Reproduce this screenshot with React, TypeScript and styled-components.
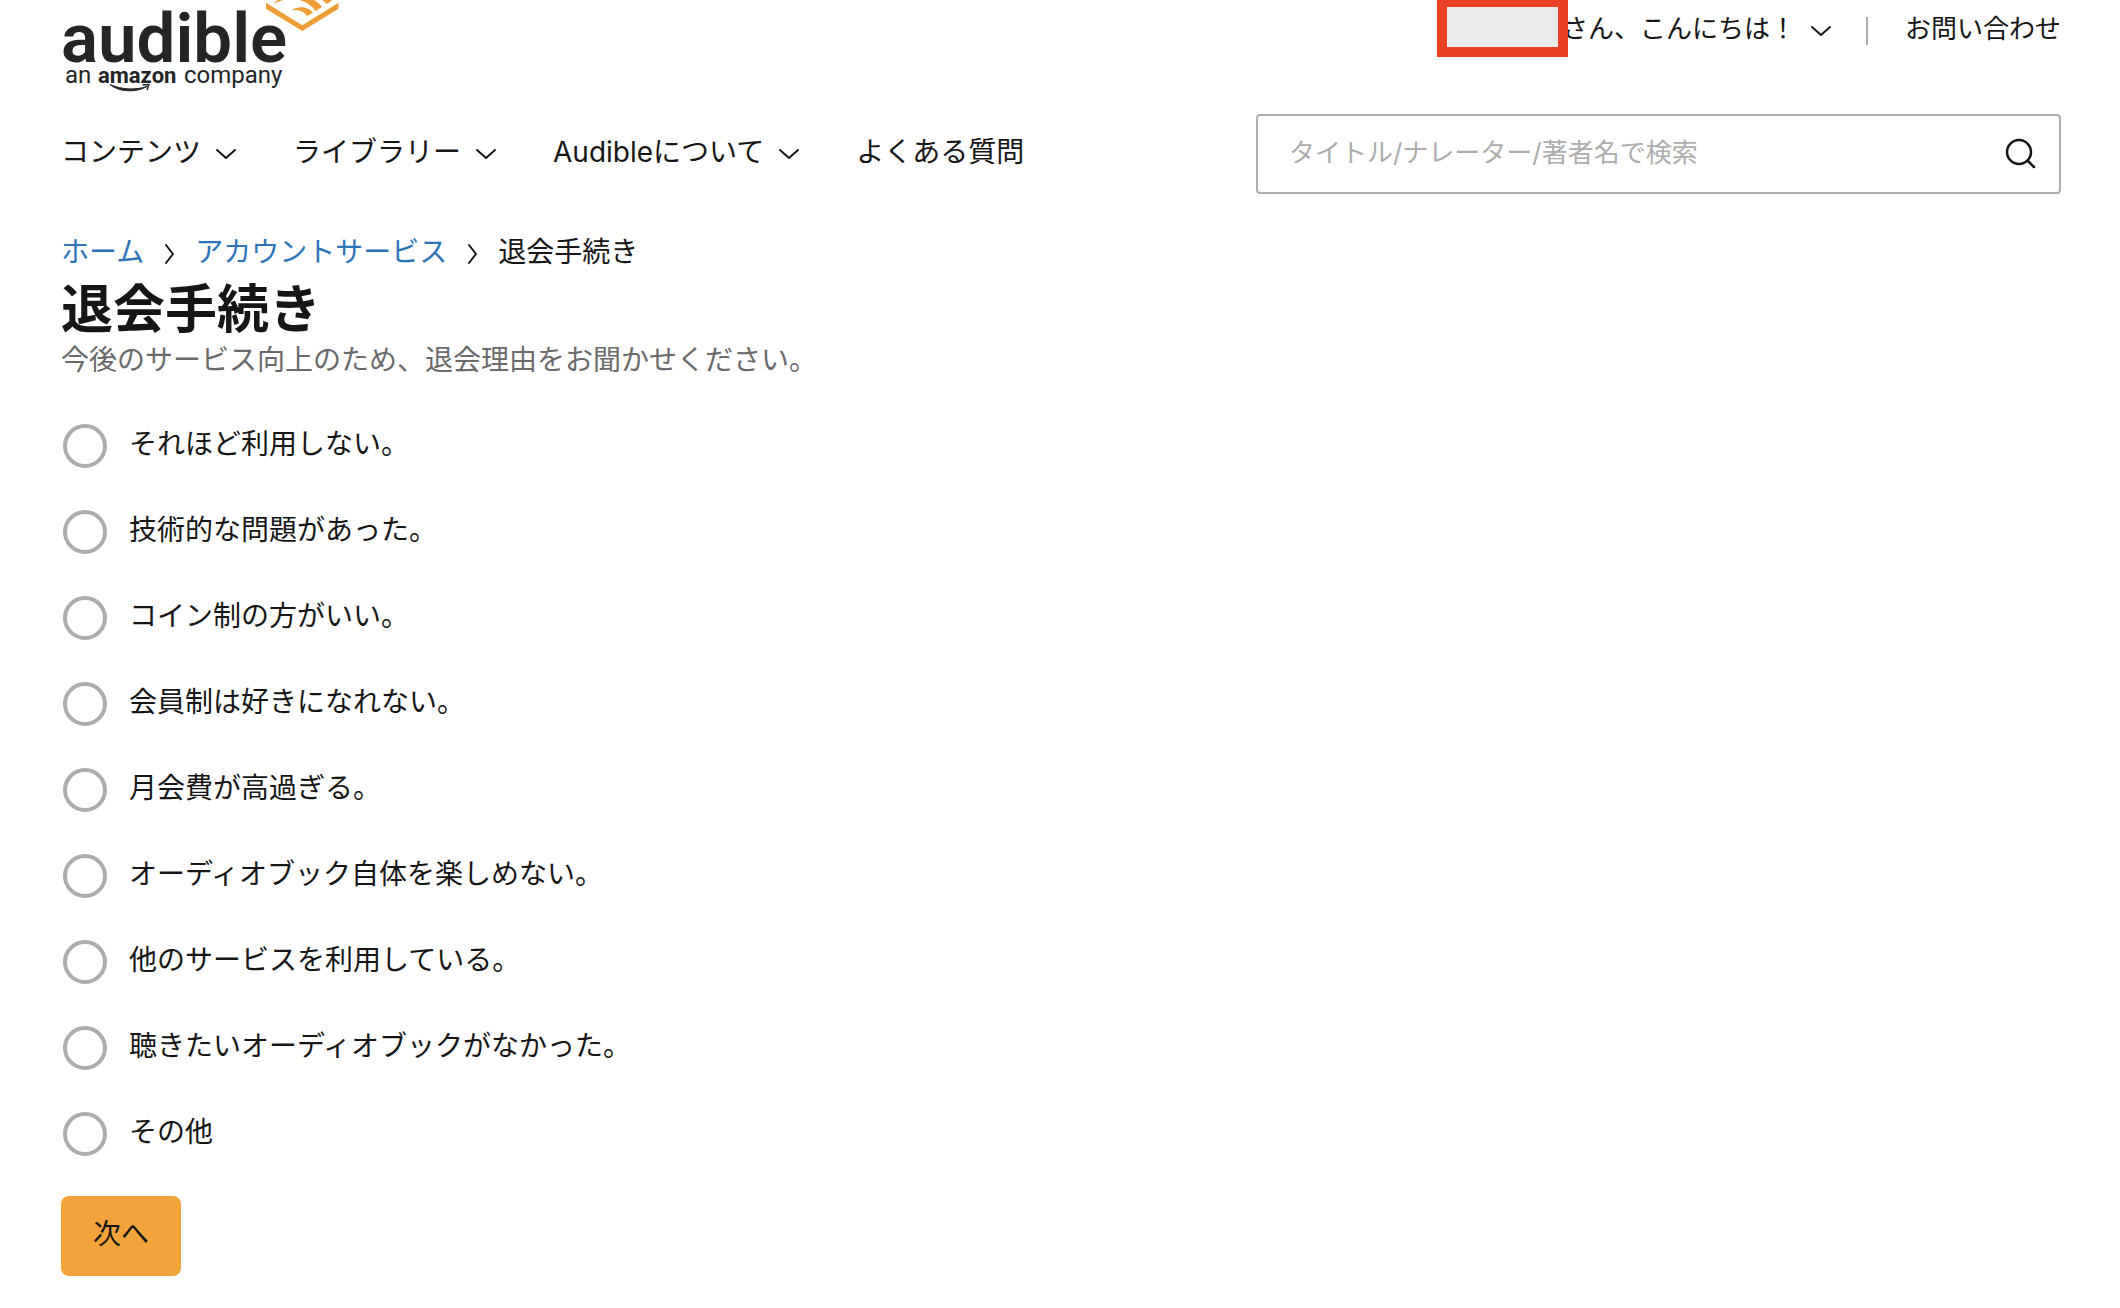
import React, { useState } from "react";
import styled, { createGlobalStyle } from "styled-components";

const GlobalStyle = createGlobalStyle`
  *, *::before, *::after { box-sizing: border-box; }
  body {
    margin: 0;
    background: #fff;
    color: #161616;
    font-family: Inter, "Noto Sans CJK JP", sans-serif;
    font-size: 28px;
    line-height: 40px;
  }
`;

const Page = styled.div`
  padding: 0 59px 32px 61px;
`;

const TopBar = styled.header`
  display: flex;
  justify-content: space-between;
  align-items: flex-start;
  height: 104px;
`;

const LogoLink = styled.a`
  display: block;
  line-height: 0;
`;

const AccountNav = styled.nav`
  display: flex;
  align-items: center;
  height: 57px;
  font-size: 26px;
`;

const NameMask = styled.span`
  align-self: flex-start;
  position: relative;
  width: 131px;
  height: 60px;
  margin: -3px -6px 0 0;
  border: 10px solid #ea4025;
  background: #ebebeb;
`;

const MenuButton = styled.button`
  display: flex;
  align-items: center;
  gap: 14px;
  padding: 0;
  border: 0;
  background: none;
  color: inherit;
  font: inherit;
  cursor: pointer;
`;

const Divider = styled.span`
  width: 2px;
  height: 28px;
  margin: 4px 37px 0 34px;
  background: #adadad;
`;

const PlainLink = styled.a`
  color: inherit;
  text-decoration: none;
`;

const NavBar = styled.div`
  display: flex;
  justify-content: space-between;
  align-items: center;
  margin-top: 10px;
`;

const MainNav = styled.nav`
  display: flex;
  align-items: center;
  gap: 56px;
  padding-bottom: 4px;
`;

const SearchBox = styled.form`
  display: flex;
  align-items: center;
  width: 805px;
  height: 80px;
  padding: 0 22px 0 31px;
  border: 2px solid #adadad;
  border-radius: 4px;
`;

const SearchInput = styled.input`
  flex: 1;
  min-width: 0;
  height: 40px;
  padding: 0 0 2px;
  border: 0;
  outline: 0;
  background: none;
  color: inherit;
  font: inherit;
  font-size: 26px;
  &::placeholder { color: #adadad; opacity: 1; }
`;

const IconButton = styled.button`
  display: flex;
  padding: 0;
  border: 0;
  background: none;
  color: inherit;
  cursor: pointer;
`;

const ChevronIcon = styled.svg`
  flex: none;
  fill: none;
  stroke: currentColor;
  stroke-width: 2;
  stroke-linecap: round;
  stroke-linejoin: round;
`;

const Breadcrumb = styled.nav`
  display: flex;
  align-items: center;
  gap: 20px;
  margin-top: 38px;
`;

const CrumbLink = styled.a`
  color: #2d74b8;
  text-decoration: none;
`;

const Title = styled.h1`
  margin: 8px 0 0;
  font-size: 52px;
  line-height: 60px;
  font-weight: 700;
`;

const Lead = styled.p`
  margin: 0;
  color: #6a6a6a;
`;

const ReasonList = styled.fieldset`
  display: grid;
  gap: 42px;
  margin: 44px 0 40px;
  padding: 0 2px;
  border: 0;
`;

const Reason = styled.label`
  display: flex;
  align-items: center;
  gap: 22px;
  height: 44px;
  cursor: pointer;
`;

const ReasonText = styled.span`
  padding-bottom: 4px;
`;

const Radio = styled.input`
  appearance: none;
  flex: none;
  width: 44px;
  height: 44px;
  margin: 0;
  border: 4px solid #adadad;
  border-radius: 50%;
  &:checked { border: 14px solid #f2a43a; }
`;

const NextButton = styled.button`
  display: block;
  height: 80px;
  padding: 0 32px 4px;
  border: 0;
  border-radius: 8px;
  background: #f2a43a;
  color: inherit;
  font: inherit;
  cursor: pointer;
`;

const ChevronDown = () => (
  <ChevronIcon width="22" height="22" viewBox="0 0 22 22" aria-hidden="true">
    <path d="M2 9l9 8 9-8" />
  </ChevronIcon>
);

const ChevronRight = () => (
  <ChevronIcon width="11" height="26" viewBox="0 0 11 26" aria-hidden="true">
    <path d="M2 6l7 9-7 9" />
  </ChevronIcon>
);

const Logo = () => (
  <svg width="280" height="96" viewBox="61 0 280 96" role="img" aria-label="audible, an amazon company">
    <g fill="#232527" fontFamily="Roboto, sans-serif">
      <text x="61" y="62" fontSize="69" fontWeight="600">audible</text>
      <g fontSize="24">
        <text x="65" y="83">an</text>
        <text x="98" y="83" fontSize="22" fontWeight="700">amazon</text>
        <text x="184" y="83">company</text>
      </g>
    </g>
    <path d="M110 84.500C118 91.500 135 93.500 147 86.500C136 90 122 90 110 84.500z" fill="#232527" stroke="#232527" strokeWidth="1" strokeLinejoin="round" />
    <path d="M142.500 85L149 84.500L147 90" fill="none" stroke="#232527" strokeWidth="1.500" strokeLinejoin="round" />
    <g fill="#f09d37">
      <path d="M266 2.700v6l36.300 22.300 36.200-22.300v-6l-36.200 22.600z" />
      <path d="M291.500 10.500C298 5.500 308 6.500 313 12.800L307 16C303.500 11 297.500 9 291.500 10.500z" />
      <path d="M273.500 4C284 -8 309 -9 322 7L315.500 11C306 -2.500 288 -4.500 273.500 4z" />
      <path d="M320 -6L332 .5L326.500 4L317 -5z" />
    </g>
  </svg>
);

const menus = ["コンテンツ", "ライブラリー", "Audibleについて"];

const reasons = [
  "それほど利用しない。",
  "技術的な問題があった。",
  "コイン制の方がいい。",
  "会員制は好きになれない。",
  "月会費が高過ぎる。",
  "オーディオブック自体を楽しめない。",
  "他のサービスを利用している。",
  "聴きたいオーディオブックがなかった。",
  "その他",
];

export default function App() {
  const [picked, setPicked] = useState<string | null>(null);
  return (
    <>
      <GlobalStyle />
      <Page>
        <TopBar>
          <LogoLink href="#"><Logo /></LogoLink>
          <AccountNav aria-label="アカウント">
            <NameMask />
            <MenuButton type="button">さん、こんにちは！<ChevronDown /></MenuButton>
            <Divider />
            <PlainLink href="#">お問い合わせ</PlainLink>
          </AccountNav>
        </TopBar>
        <NavBar>
          <MainNav>
            {menus.map((m) => (
              <MenuButton type="button" key={m}>{m}<ChevronDown /></MenuButton>
            ))}
            <PlainLink href="#">よくある質問</PlainLink>
          </MainNav>
          <SearchBox role="search" onSubmit={(e) => e.preventDefault()}>
            <SearchInput type="text" aria-label="検索" placeholder="タイトル/ナレーター/著者名で検索" />
            <IconButton type="submit" aria-label="検索する">
              <svg width="32" height="32" viewBox="0 0 32 32" fill="none" stroke="currentColor" strokeWidth="2.500" strokeLinecap="round">
                <circle cx="14" cy="14" r="12" />
                <path d="M23 23l6 6" />
              </svg>
            </IconButton>
          </SearchBox>
        </NavBar>
        <main>
          <Breadcrumb aria-label="パンくずリスト">
            <CrumbLink href="#">ホーム</CrumbLink>
            <ChevronRight />
            <CrumbLink href="#">アカウントサービス</CrumbLink>
            <ChevronRight />
            <span>退会手続き</span>
          </Breadcrumb>
          <Title>退会手続き</Title>
          <Lead>今後のサービス向上のため、退会理由をお聞かせください。</Lead>
          <form onSubmit={(e) => e.preventDefault()}>
            <ReasonList aria-label="退会理由">
              {reasons.map((r) => (
                <Reason key={r}>
                  <Radio type="radio" name="reason" value={r} checked={picked === r} onChange={() => setPicked(r)} />
                  <ReasonText>{r}</ReasonText>
                </Reason>
              ))}
            </ReasonList>
            <NextButton type="submit">次へ</NextButton>
          </form>
        </main>
      </Page>
    </>
  );
}
